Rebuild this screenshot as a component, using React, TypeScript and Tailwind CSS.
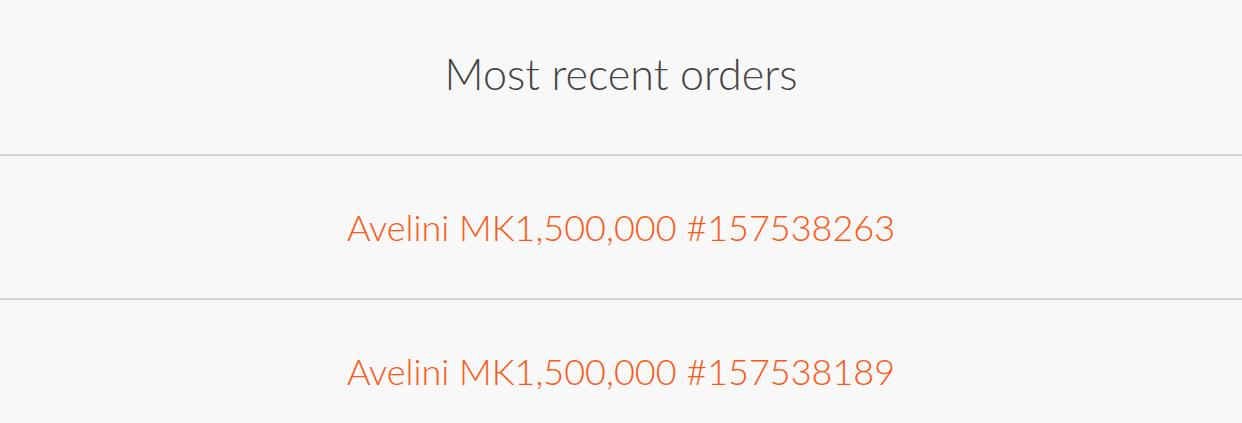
export default function App() {
  const orders = ["Avelini MK1,500,000 #157538263", "Avelini MK1,500,000 #157538189"];
  return (
    <div className="min-h-[423px] w-full bg-[#f8f8f8] font-light" style={{ fontFamily: "Lato, 'Noto Sans', sans-serif" }}>
      <div className="flex h-[156px] items-center justify-center border-b-2 border-[#d5d5d5] pb-[8px]">
        <h2 className="text-[43px] leading-none text-[#454545]">Most recent orders</h2>
      </div>
      {orders.map((o) => (
        <div key={o} className="flex h-[144px] items-center justify-center border-b-2 border-[#d5d5d5]">
          <a className="text-[36px] leading-none text-[#ff5714]">{o}</a>
        </div>
      ))}
    </div>
  );
}
